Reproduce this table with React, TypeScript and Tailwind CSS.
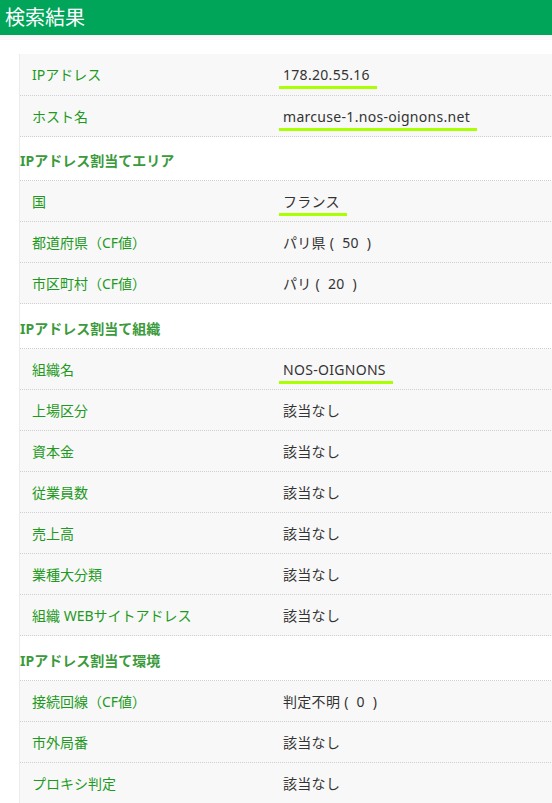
import React from "react";

type Row =
  | { kind: "section"; label: string; first?: boolean }
  | { kind: "data"; label: string; value: string; mark?: boolean; tall?: boolean };

const rows: Row[] = [
  { kind: "data", label: "IPアドレス", value: "178.20.55.16", mark: true, tall: true },
  { kind: "data", label: "ホスト名", value: "marcuse-1.nos-oignons.net", mark: true },
  { kind: "section", label: "IPアドレス割当てエリア", first: true },
  { kind: "data", label: "国", value: "フランス", mark: true },
  { kind: "data", label: "都道府県（CF値）", value: "パリ県 (  50  )" },
  { kind: "data", label: "市区町村（CF値）", value: "パリ (  20  )" },
  { kind: "section", label: "IPアドレス割当て組織" },
  { kind: "data", label: "組織名", value: "NOS-OIGNONS", mark: true },
  { kind: "data", label: "上場区分", value: "該当なし" },
  { kind: "data", label: "資本金", value: "該当なし" },
  { kind: "data", label: "従業員数", value: "該当なし" },
  { kind: "data", label: "売上高", value: "該当なし" },
  { kind: "data", label: "業種大分類", value: "該当なし" },
  { kind: "data", label: "組織 WEBサイトアドレス", value: "該当なし" },
  { kind: "section", label: "IPアドレス割当て環境" },
  { kind: "data", label: "接続回線（CF値）", value: "判定不明 (  0  )" },
  { kind: "data", label: "市外局番", value: "該当なし" },
  { kind: "data", label: "プロキシ判定", value: "該当なし" },
];

export default function App() {
  return (
    <div
      className="w-[552px] h-[803px] overflow-hidden bg-white"
      style={{ fontFamily: '"Noto Sans", "Noto Sans CJK JP", sans-serif' }}
    >
      <div className="h-[35px] bg-[#00a55a] flex items-center pl-[5px]">
        <h1 className="text-white text-[20px] leading-none font-normal">検索結果</h1>
      </div>
      <div className="h-[5px] bg-[#f9f9f9]" />
      <div className="ml-[19px] mt-[14px] w-[560px] border-l border-[#ececec]">
        {rows.map((r, i) =>
          r.kind === "section" ? (
            <div
              key={i}
              className={`${r.first ? "h-[44px] pt-[3px]" : "h-[45px] pt-[4px]"} flex items-center bg-white border-b border-dotted border-[#cfcfcf] text-[14px] font-bold text-[#3b9a3b]`}
            >
              {r.label}
            </div>
          ) : (
            <div
              key={i}
              className={`${r.tall ? "h-[42px]" : "h-[41px]"} flex items-center bg-[#f8f8f8] border-b border-dotted border-[#cfcfcf] text-[14px]`}
            >
              <div className="w-[251px] pl-[12px] text-[#1e9a1e]">{r.label}</div>
              <div className="pl-[12px] text-[#333] tracking-[0.3px] whitespace-pre">
                {r.mark ? (
                  <span className="relative inline-block">
                    {r.value}
                    <span className="absolute left-[-4px] right-[-7px] bottom-[-4px] h-[3px] bg-[#aaff00]" />
                  </span>
                ) : (
                  r.value
                )}
              </div>
            </div>
          )
        )}
      </div>
    </div>
  );
}
